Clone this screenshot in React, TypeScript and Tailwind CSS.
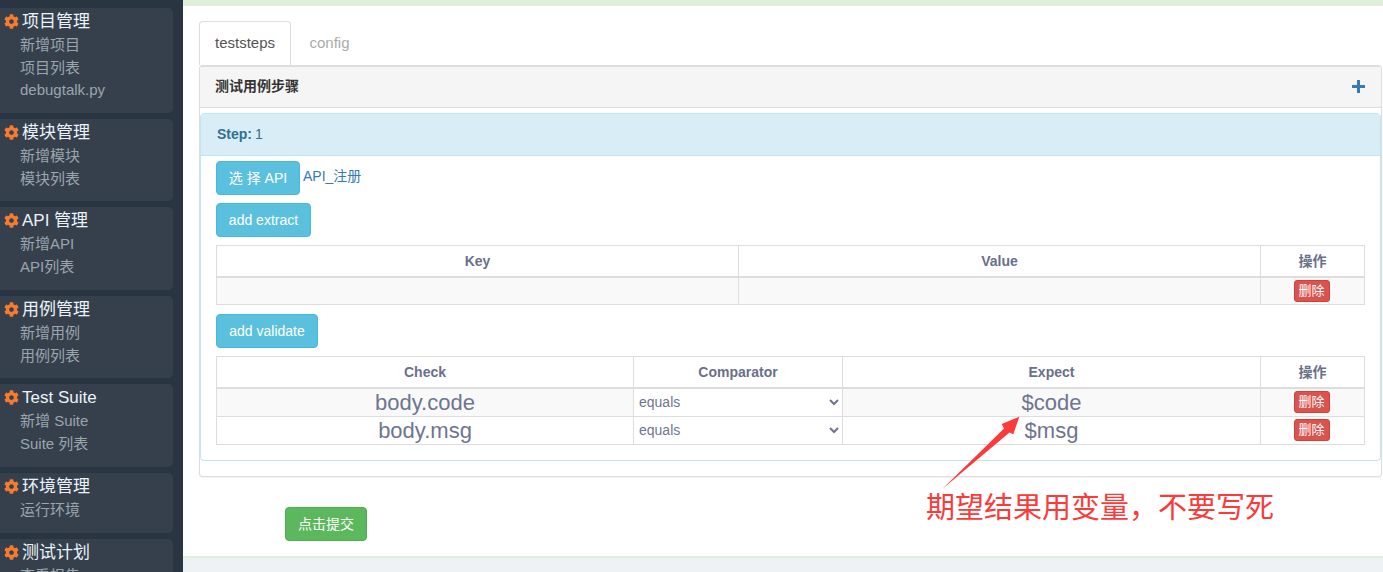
import React from "react";
import { FaCog } from "react-icons/fa";

const groups = [
  { t: "项目管理", items: ["新增项目", "项目列表", "debugtalk.py"], h: "h-[105px]" },
  { t: "模块管理", items: ["新增模块", "模块列表"], h: "h-[82px]" },
  { t: "API 管理", items: ["新增API", "API列表"], h: "h-[83px]" },
  { t: "用例管理", items: ["新增用例", "用例列表"], h: "h-[82px]" },
  { t: "Test Suite", items: ["新增 Suite", "Suite 列表"], h: "h-[83px]" },
  { t: "环境管理", items: ["运行环境"], h: "h-[60px]" },
  { t: "测试计划", items: ["查看报告"], h: "h-[60px]" },
];

function Del() {
  return (
    <div className="flex items-center justify-center pr-[2px]">
      <button className="inline-block h-[22px] w-[36px] rounded-[3px] border border-[#d43f3a] bg-[#d9534f] text-[13px] leading-[20px] text-white">
        删除
      </button>
    </div>
  );
}

function InfoBtn({ children, w }: { children: React.ReactNode; w: string }) {
  return (
    <button className={`h-[34px] ${w} rounded-[4px] border border-[#46b8da] bg-[#5bc0de] text-[14px] text-white`}>
      {children}
    </button>
  );
}

const th = "border border-[#ddd] border-b-2 h-[31px] p-0 pt-[1px] text-center text-[14px] font-bold text-[#6b6f8c]";
const td = "border border-[#ddd] h-[28px] p-0 text-center align-middle";
const big = "border border-[#ddd] h-[28px] p-0 pt-[1px] text-center align-middle text-[22px] leading-[25px] text-[#6f758f]";

function Row({ a, b, odd }: { a: string; b: string; odd: boolean }) {
  return (
    <tr className={odd ? "bg-[#f9f9f9]" : "bg-white"}>
      <td className={big}>{a}</td>
      <td className={`${td} bg-white`}>
        <select className="block h-[27px] w-full bg-white pl-[1px] text-[14px] text-[#6f758f] outline-none">
          <option>equals</option>
        </select>
      </td>
      <td className={big}>{b}</td>
      <td className={td}>
        <Del />
      </td>
    </tr>
  );
}

export default function App() {
  return (
    <div className="relative flex h-[572px] w-[1383px] overflow-hidden bg-[#eef2f5] font-['Liberation_Sans','Noto_Sans_CJK_SC',sans-serif] text-[14px]">
      <aside className="flex h-full w-[183px] shrink-0 flex-col gap-[6px] overflow-hidden bg-[#2a3542] pt-[8px] pr-[10px]">
        {groups.map((g) => (
          <div key={g.t} className={`${g.h} shrink-0 rounded-r-[5px] bg-[#36404d] pt-[3px]`}>
            <div className="flex h-[21px] items-center pl-[4px] text-[17px] leading-[21px] text-[#eaf3f8]">
              <FaCog className="mr-[3px] h-[15px] w-[15px] shrink-0 text-[#f47b30]" />
              {g.t}
            </div>
            <div className="pt-[2px]">
              {g.items.map((i) => (
                <div key={i} className="h-[22.7px] pl-[20px] text-[15px] leading-[22.7px] text-[#9ba5ae]">{i}</div>
              ))}
            </div>
          </div>
        ))}
      </aside>

      <main className="box-content h-[550px] w-[1200px] shrink-0 border-t-[6px] border-b-2 border-[#dff0d8] bg-white">
        <div className="pt-[15px] pl-[16px] pr-[1px]">
          <div className="flex h-[44px] items-stretch">
            <div className="flex w-[92px] items-center justify-center rounded-t-[4px] border border-b-0 border-[#ddd] bg-white text-[15px] text-[#555]">teststeps</div>
            <div className="flex w-[77px] items-center justify-center text-[15px] text-[#aaa]">config</div>
          </div>
          <section className="h-[412px] rounded-[4px] border border-[#ddd] border-t-2 bg-white shadow-[0_1px_1px_rgba(0,0,0,0.05)]">
            <div className="flex h-[41px] items-center justify-between border-b border-[#ddd] bg-[#f5f5f5] pb-[2px] pl-[15px] pr-[16px]">
              <span className="text-[14px] font-bold text-[#333]">测试用例步骤</span>
              <svg viewBox="0 0 13 13" className="h-[13px] w-[13px]" aria-hidden="true">
                <path d="M5 0h3v5h5v3H8v5H5V8H0V5h5z" fill="#337ab7" />
              </svg>
            </div>
            <div className="pt-[5px]">
              <div className="h-[348px] rounded-[4px] border border-[#bce8f1] bg-white">
                <div className="flex h-[42px] items-center border-b border-[#bce8f1] bg-[#d9edf7] pl-[16px] text-[14px] text-[#31708f]">
                  <b className="mr-[3px]">Step:</b> 1
                </div>
                <div className="px-[15px] pt-[5px]">
                  <div className="flex items-start">
                    <InfoBtn w="w-[84px]">选 择 API</InfoBtn>
                    <a className="ml-[3px] pt-[5px] text-[14px] leading-[20px] text-[#337ab7]">API_注册</a>
                  </div>
                  <div className="mt-[8px]"><InfoBtn w="w-[95px]">add extract</InfoBtn></div>
                  <table className="mt-[8px] w-[1148px] table-fixed border-collapse">
                    <colgroup>
                      <col className="w-[522px]" />
                      <col className="w-[522px]" />
                      <col className="w-[104px]" />
                    </colgroup>
                    <thead>
                      <tr>
                        <th className={th}>Key</th>
                        <th className={th}>Value</th>
                        <th className={th}>操作</th>
                      </tr>
                    </thead>
                    <tbody>
                      <tr className="bg-[#f9f9f9]">
                        <td className={td}></td>
                        <td className={td}></td>
                        <td className={td}><Del /></td>
                      </tr>
                    </tbody>
                  </table>
                  <div className="mt-[9px]"><InfoBtn w="w-[102px]">add validate</InfoBtn></div>
                  <table className="mt-[8px] w-[1148px] table-fixed border-collapse">
                    <colgroup>
                      <col className="w-[417px]" />
                      <col className="w-[209px]" />
                      <col className="w-[418px]" />
                      <col className="w-[104px]" />
                    </colgroup>
                    <thead>
                      <tr>
                        <th className={th}>Check</th>
                        <th className={th}>Comparator</th>
                        <th className={th}>Expect</th>
                        <th className={th}>操作</th>
                      </tr>
                    </thead>
                    <tbody>
                      <Row a="body.code" b="$code" odd />
                      <Row a="body.msg" b="$msg" odd={false} />
                    </tbody>
                  </table>
                </div>
              </div>
            </div>
          </section>
          <div className="pt-[30px] pl-[86px]">
            <button className="h-[34px] w-[82px] rounded-[4px] border border-[#4cae4c] bg-[#5cb85c] text-[14px] text-white">点击提交</button>
          </div>
        </div>
      </main>

      <svg className="pointer-events-none absolute left-[930px] top-[410px] h-[90px] w-[100px]" viewBox="930 410 100 90" aria-hidden="true">
        <path d="M942.300 489 L1004 428.500 L1001.700 424 L1019.300 416.700 L1013.300 434.300 L1009.500 432.500 Z" fill="#fb3a3a" />
      </svg>
      <div className="absolute left-[926px] top-[490px] text-[29px] leading-[36px] whitespace-nowrap text-[#fb3a3a]">期望结果用变量，不要写死</div>
    </div>
  );
}
